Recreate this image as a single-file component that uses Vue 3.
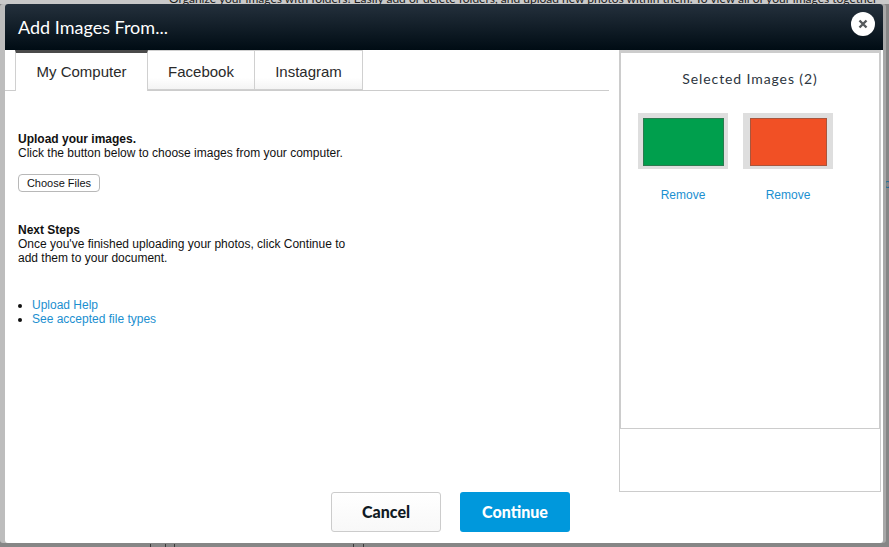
<script setup>
const tabs = ['My Computer', 'Facebook', 'Instagram']
const selected = [
  { id: 1, color: '#009f4d', edge: '#2c7a4f', w: 81 },
  { id: 2, color: '#f15025', edge: '#a9553c', w: 77 }
]
const marks = [150, 165, 174, 353, 363]
</script>

<template>
  <div class="page">
    <p class="behind-top">Organize your images with folders! Easily add or delete folders, and upload new photos within them. To view all of your images together</p>
    <span class="behind-link">o</span>
    <i v-for="m in marks" :key="m" class="mark" :style="{ left: m + 'px' }"></i>
    <div class="dialog">
      <header class="head">
        <h1>Add Images From...</h1>
        <button class="close" aria-label="Close">
          <svg width="10" height="10" viewBox="0 0 10 10"><path d="M1.5 1.5l7 7M8.5 1.5l-7 7" stroke="#55595c" stroke-width="2.4"/></svg>
        </button>
      </header>
      <div class="body">
        <section class="main">
          <nav class="tabs">
            <div v-for="(t, i) in tabs" :key="t" class="tab" :class="{ active: i === 0 }">{{ t }}</div>
          </nav>
          <div class="content">
            <p><b>Upload your images.</b><br>Click the button below to choose images from your computer.</p>
            <button class="choose">Choose Files</button>
            <p class="next"><b>Next Steps</b><br>Once you've finished uploading your photos, click Continue to<br>add them to your document.</p>
            <ul>
              <li><a>Upload Help</a></li>
              <li><a>See accepted file types</a></li>
            </ul>
          </div>
        </section>
        <aside class="side">
          <div class="selected">
            <h2>Selected Images (2)</h2>
            <div class="thumbs">
              <div v-for="s in selected" :key="s.id" class="thumb">
                <div class="frame">
                  <div class="swatch" :style="{ background: s.color, borderColor: s.edge, width: s.w + 'px' }"></div>
                </div>
                <a>Remove</a>
              </div>
            </div>
          </div>
        </aside>
      </div>
      <footer class="foot">
        <button class="btn cancel">Cancel</button>
        <button class="btn go">Continue</button>
      </footer>
    </div>
  </div>
</template>

<style>
html, body { margin: 0; background: #8a8a8a; }
</style>

<style scoped>
.page {
  position: relative;
  width: 889px;
  height: 547px;
  overflow: hidden;
  background: #868686;
  font-family: "Liberation Sans", Arial, sans-serif;
  padding: 4px 6px 4px 5px;
  box-sizing: border-box;
}
.page::before {
  content: "";
  position: absolute;
  left: 0;
  top: 0;
  right: 0;
  height: 4px;
  background: #c9c9c9;
}
.behind-top {
  position: absolute;
  z-index: 1;
  left: 169px;
  top: -8px;
  margin: 0;
  white-space: nowrap;
  font-family: Lato, sans-serif;
  font-size: 12px;
  line-height: 14px;
  color: #1c1c1c;
}
.behind-link {
  position: absolute;
  left: 884px;
  top: 177px;
  font-size: 12px;
  color: #1a6a94;
}
.mark {
  position: absolute;
  bottom: 0;
  width: 1px;
  height: 3px;
  background: #3a3a3a;
}
.dialog {
  position: relative;
  z-index: 2;
  width: 878px;
  height: 539px;
  background: #fff;
  border-radius: 3px;
  display: flex;
  flex-direction: column;
  box-shadow: -5px 0 0 #bdbdbd, 3px 0 0 #a8a8a8;
}
.head {
  height: 46px;
  flex: none;
  background: linear-gradient(#24303c, #000c14);
  border-radius: 3px 3px 0 0;
  display: flex;
  align-items: flex-start;
  justify-content: space-between;
  padding: 8px 8px 0 13px;
  box-sizing: border-box;
}
h1 {
  margin: 4px 0 0;
  font-family: Lato, sans-serif;
  font-weight: 400;
  font-size: 18px;
  line-height: 22px;
  color: #fff;
}
.close {
  width: 24px;
  height: 24px;
  padding: 0;
  border: 0;
  border-radius: 50%;
  background: #fff;
  display: flex;
  align-items: center;
  justify-content: center;
}
.body {
  display: flex;
  height: 442px;
  flex: none;
}
.main {
  width: 604px;
}
.tabs {
  display: flex;
  height: 41px;
  padding-left: 10px;
  border-bottom: 1px solid #ccc;
  box-sizing: border-box;
}
.tab {
  height: 40px;
  line-height: 42px;
  font-size: 15px;
  color: #2a2a2a;
  text-align: center;
  border: 1px solid #d0d0d0;
  border-left: 0;
  background: linear-gradient(#fff 70%, #f4f4f4);
  box-sizing: border-box;
}
.tab.active {
  height: 41px;
  width: 133px;
  background: #fff;
  border-top: 3px solid #4a4a4a;
  border-left: 1px solid #d0d0d0;
  border-bottom: 0;
  line-height: 38px;
}
.tab:nth-child(2) { width: 107px; }
.tab:nth-child(3) { width: 108px; }
.content {
  padding: 41px 0 0 13px;
  font-size: 12px;
  line-height: 14px;
  color: #111;
}
.content p { margin: 0; }
.choose {
  display: block;
  margin-top: 14px;
  width: 82px;
  height: 18px;
  padding: 0;
  border: 1px solid #b8b8b8;
  border-radius: 4px;
  background: #fff;
  font-family: inherit;
  font-size: 11px;
  color: #111;
}
.next { margin-top: 31px !important; }
ul {
  margin: 33px 0 0;
  padding: 0 0 0 14px;
  list-style: disc;
}
li { line-height: 14px; }
a { color: #1b8fd0; }
.side {
  width: 262px;
  margin-left: 10px;
  height: 442px;
  border: 1px solid #ccc;
  box-sizing: border-box;
}
.selected {
  height: 378px;
  border: 1px solid #ccc;
  border-top-width: 2px;
  box-sizing: border-box;
}
h2 {
  margin: 17px 0 0;
  text-align: center;
  font-family: Lato, sans-serif;
  font-weight: 400;
  font-size: 14px;
  line-height: 17px;
  letter-spacing: .9px;
  color: #2c3540;
}
.thumbs {
  display: flex;
  gap: 15px;
  margin: 26px 0 0 17px;
}
.thumb {
  width: 90px;
  text-align: center;
  font-size: 12px;
}
.frame {
  height: 56px;
  padding-top: 2px;
  box-sizing: border-box;
  background: #dedede;
  display: flex;
  align-items: center;
  justify-content: center;
}
.swatch {
  height: 48px;
  border: 1px solid;
  box-sizing: border-box;
}
.thumb a {
  display: block;
  margin-top: 19px;
}
.foot {
  display: flex;
  gap: 19px;
  padding: 0 0 0 326px;
}
.btn {
  width: 110px;
  height: 40px;
  padding: 0 0 2px;
  border-radius: 3px;
  font-family: Lato, sans-serif;
  font-size: 16px;
  font-weight: 900;
  box-sizing: border-box;
}
.cancel {
  background: linear-gradient(#fff, #f8f8f8);
  border: 1px solid #ccc;
  color: #101a24;
}
.go {
  background: #0098dc;
  border: 0;
  color: #fff;
}
</style>
